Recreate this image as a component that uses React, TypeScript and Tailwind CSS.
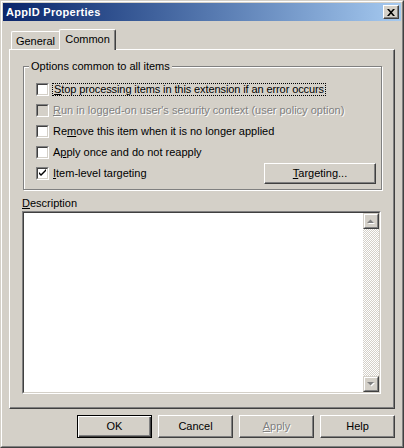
import React from 'react';

const FONT = "font-['Tahoma','Liberation_Sans',sans-serif]";

function CheckBox({ checked = false, disabled = false }: { checked?: boolean; disabled?: boolean }) {
  return (
    <div className="w-[13px] h-[13px] shrink-0 border border-t-[#808080] border-l-[#808080] border-r-white border-b-white">
      <div
        className={
          'w-full h-full border border-t-[#404040] border-l-[#404040] border-r-[#d4d0c8] border-b-[#d4d0c8] flex items-center justify-center ' +
          (disabled ? 'bg-[#d4d0c8]' : 'bg-white')
        }
      >
        {checked && (
          <svg width="9" height="9" viewBox="0 0 9 9">
            <path d="M1 3v2l2 2 5-5V0L3 5z" fill="#000" />
          </svg>
        )}
      </div>
    </div>
  );
}

function Button({ children, isDefault = false, className = '' }: { children: React.ReactNode; isDefault?: boolean; className?: string }) {
  if (isDefault) {
    return (
      <div className={'border border-black ' + className}>
        <div className="w-full h-full flex items-center justify-center shadow-[inset_1px_1px_0_#fff,inset_-1px_-1px_0_#404040,inset_-2px_-2px_0_#808080]">
          {children}
        </div>
      </div>
    );
  }
  return (
    <div
      className={
        'flex items-center justify-center border border-t-white border-l-white border-r-[#404040] border-b-[#404040] shadow-[inset_-1px_-1px_0_#808080] ' +
        className
      }
    >
      {children}
    </div>
  );
}

function Arrow({ up }: { up?: boolean }) {
  return (
    <div className="w-[16px] h-[16px] shrink-0 border border-t-[#d4d0c8] border-l-[#d4d0c8] border-r-[#404040] border-b-[#404040] bg-[#d4d0c8]">
      <div className="w-full h-full border border-t-white border-l-white border-r-[#808080] border-b-[#808080] flex items-center justify-center">
        <svg width="8" height="5" viewBox="0 0 8 5">
          {up ? (
            <>
              <path d="M1 5h7L4.5 1.5z" fill="#fff" />
              <path d="M0 4h7L3.5 0.5z" fill="#808080" />
            </>
          ) : (
            <>
              <path d="M1 1h7L4.5 4.5z" fill="#fff" />
              <path d="M0 0h7L3.5 3.5z" fill="#808080" />
            </>
          )}
        </svg>
      </div>
    </div>
  );
}

const disabledText = 'text-[#808080] [text-shadow:1px_1px_0_#fff]';

export default function App() {
  return (
    <div className={'w-[404px] h-[448px] bg-[#d4d0c8] text-[11px] leading-[13px] text-black select-none ' + FONT}>
      <div className="w-full h-full border border-t-[#d4d0c8] border-l-[#d4d0c8] border-r-[#404040] border-b-[#404040]">
        <div className="w-full h-full border border-t-white border-l-white border-r-[#808080] border-b-[#808080] p-px flex flex-col">
          {/* Title bar */}
          <div className="h-[18px] flex items-center justify-between bg-linear-to-r from-[#0a246a] to-[#a6caf0] pl-[3px] pr-[2px]">
            <span className="text-white font-bold text-[11px] tracking-[0.3px]">AppID Properties</span>
            <div className="w-[16px] h-[14px] border border-t-white border-l-white border-r-[#404040] border-b-[#404040] bg-[#d4d0c8] shadow-[inset_-1px_-1px_0_#808080] flex items-center justify-center">
              <svg width="8" height="7" viewBox="0 0 8 7">
                <path d="M0 0h2l2 2.2L6 0h2L5 3.5 8 7H6L4 4.8 2 7H0l3-3.5z" fill="#000" />
              </svg>
            </div>
          </div>

          {/* Tabs */}
          <div className="mt-[8px] mx-[6px] pl-[2px] flex items-end h-[20px]">
            <div className="w-[48px] h-[18px] border-t border-l border-t-white border-l-white rounded-tl-[2px] flex items-center justify-center pt-px">
              General
            </div>
            <div className="relative z-10 -mb-px w-[57px] h-[21px] bg-[#d4d0c8] border-t border-l border-r border-t-white border-l-white border-r-[#404040] rounded-t-[2px] shadow-[inset_-1px_0_0_#808080] flex items-center justify-center pb-[2px]">
              Common
            </div>
          </div>

          {/* Tab panel */}
          <div className="mx-[6px] h-[360px] border border-t-white border-l-white border-r-[#404040] border-b-[#404040] shadow-[inset_-1px_-1px_0_#808080] flex flex-col">
            <fieldset className="mt-[10px] ml-[13px] mr-[12px] border border-[#808080] shadow-[1px_1px_0_#fff,inset_1px_1px_0_#fff] pt-[6px] pb-[5px]">
              <legend className="ml-[5px] px-[2px] bg-[#d4d0c8] leading-[13px]">Options common to all items</legend>
              <div className="flex items-center h-[21px] pl-[12px]">
                <CheckBox />
                <span className="ml-[3px] px-px border border-dotted border-black leading-[11px] tracking-[-0.1px]">
                  <u>S</u>top processing items in this extension if an error occurs
                </span>
              </div>
              <div className="flex items-center h-[21px] pl-[12px]">
                <CheckBox disabled />
                <span className={'ml-[4px] ' + disabledText}>
                  <u>R</u>un in logged-on user's security context (user policy option)
                </span>
              </div>
              <div className="flex items-center h-[21px] pl-[12px]">
                <CheckBox />
                <span className="ml-[4px]">
                  Re<u>m</u>ove this item when it is no longer applied
                </span>
              </div>
              <div className="flex items-center h-[21px] pl-[12px]">
                <CheckBox />
                <span className="ml-[4px]">
                  A<u>p</u>ply once and do not reapply
                </span>
              </div>
              <div className="flex items-center h-[21px] pl-[12px] pr-[5px]">
                <CheckBox checked />
                <span className="ml-[4px] flex-1">
                  <u>I</u>tem-level targeting
                </span>
                <Button className="w-[112px] h-[21px]">
                  <span>
                    <u>T</u>argeting...
                  </span>
                </Button>
              </div>
            </fieldset>

            <div className="mt-[7px] ml-[12px]">
              <u>D</u>escription
            </div>
            <div className="mt-[1px] ml-[12px] mr-[13px] h-[183px] border border-t-[#808080] border-l-[#808080] border-r-white border-b-white">
              <div className="w-full h-full border border-t-[#404040] border-l-[#404040] border-r-[#d4d0c8] border-b-[#d4d0c8] bg-white flex justify-end">
                <div className="w-[16px] h-full flex flex-col bg-[repeating-conic-gradient(#d4d0c8_0_25%,#fff_0_50%)] bg-[length:2px_2px]">
                  <Arrow up />
                  <div className="flex-1" />
                  <Arrow />
                </div>
              </div>
            </div>
          </div>

          {/* Buttons */}
          <div className="mt-[6px] mx-[6px] flex justify-end gap-[6px]">
            <Button isDefault className="w-[75px] h-[23px]">OK</Button>
            <Button className="w-[75px] h-[23px]">Cancel</Button>
            <Button className="w-[75px] h-[23px]">
              <span className={disabledText}>
                <u>A</u>pply
              </span>
            </Button>
            <Button className="w-[75px] h-[23px]">Help</Button>
          </div>
        </div>
      </div>
    </div>
  );
}
